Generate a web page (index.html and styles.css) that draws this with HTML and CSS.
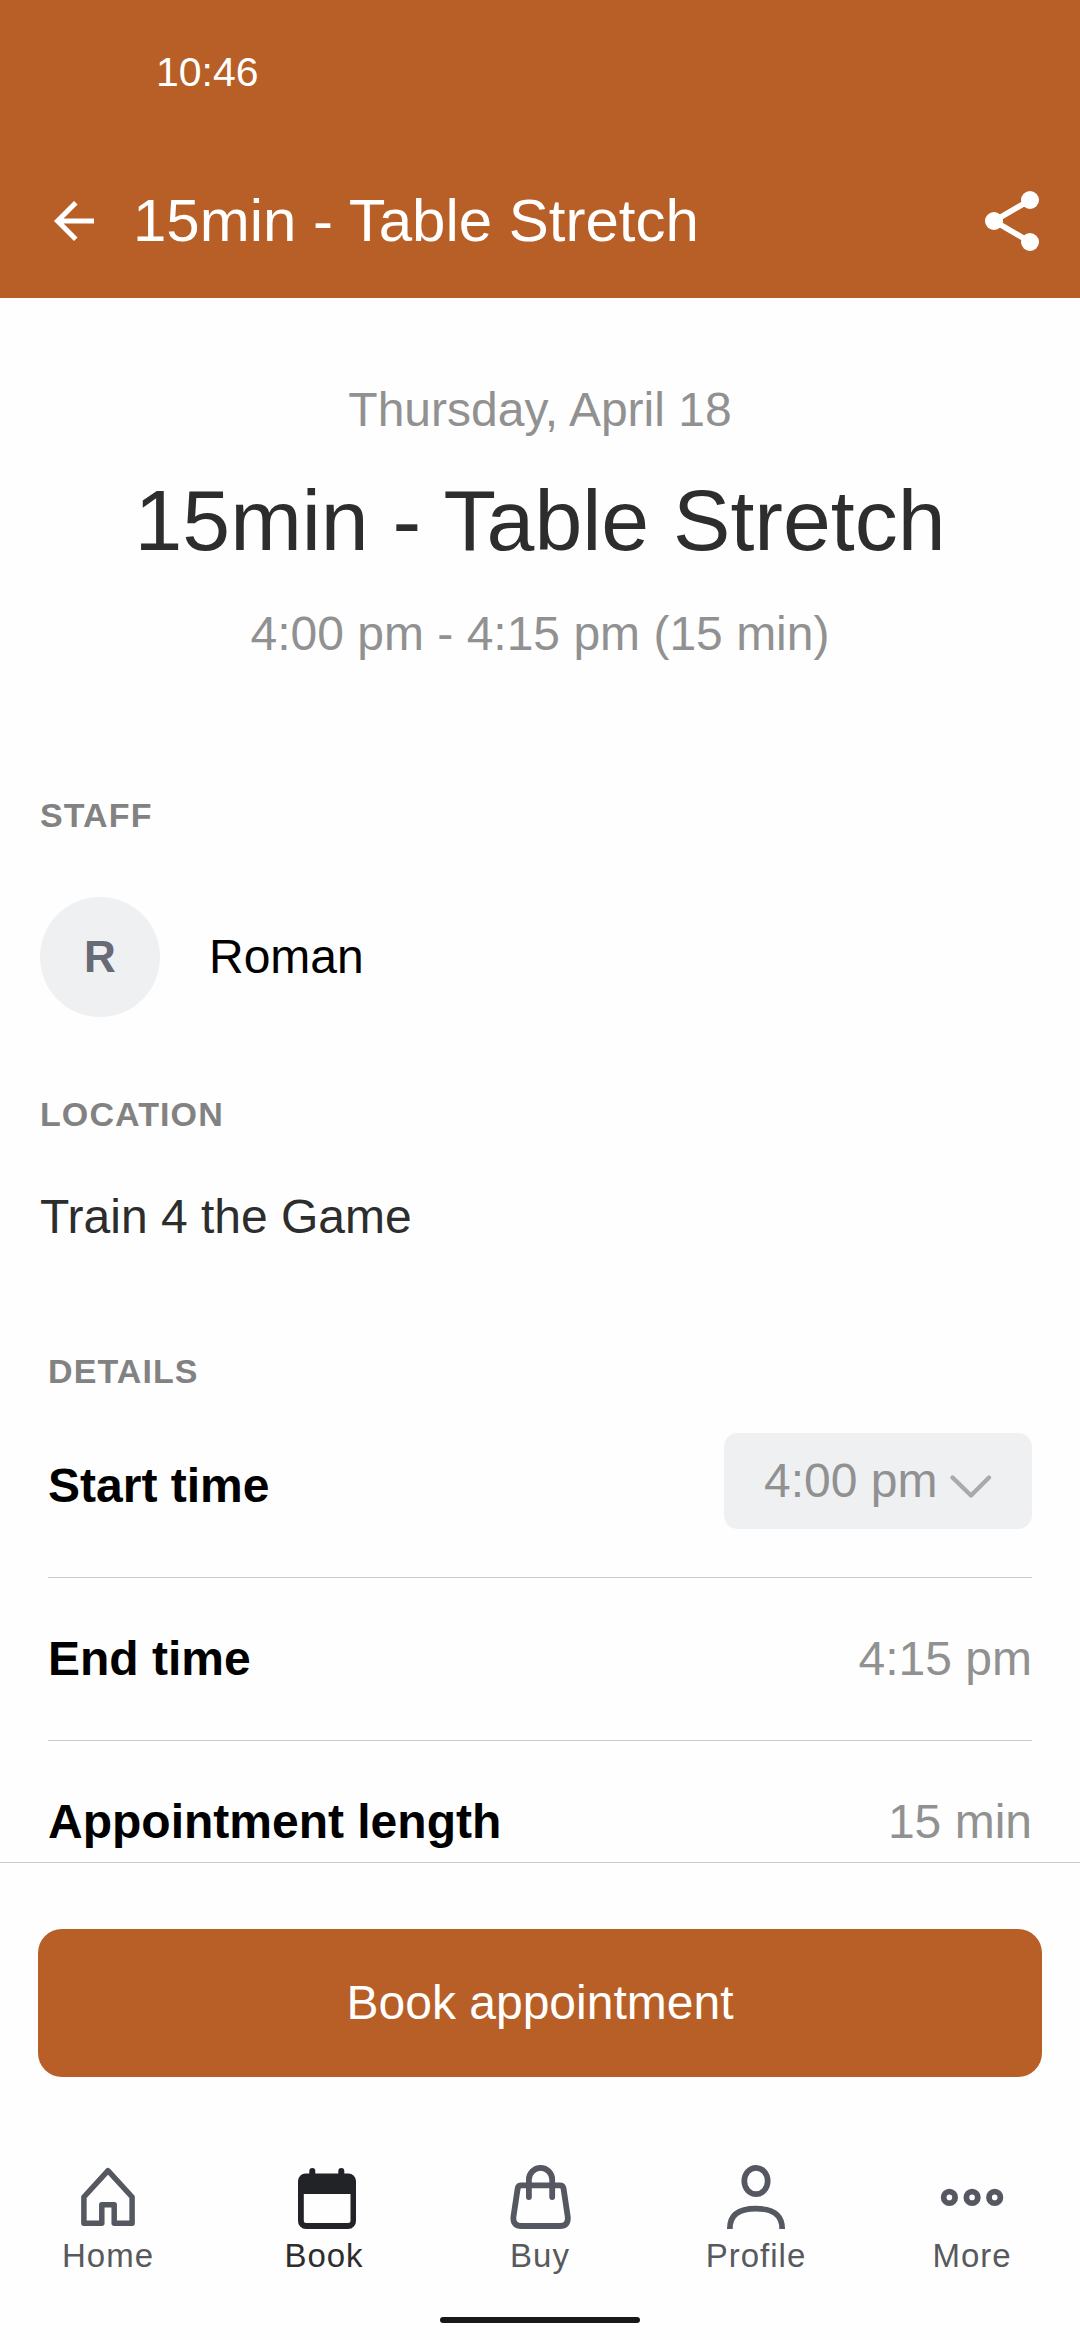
FILE: index.html
```html
<!DOCTYPE html>
<html lang="en">
<head>
<meta charset="utf-8">
<title>15min - Table Stretch</title>
<link rel="stylesheet" href="styles.css">
</head>
<body>
<div class="screen">
  <header class="header">
    <div class="status-bar">10:46</div>
    <div class="app-bar">
      <svg class="back" width="40" height="40" viewBox="4 4 16 16"><path fill="#fff" d="M20 11H7.830l5.590-5.590L12 4l-8 8 8 8 1.410-1.410L7.830 13H20v-2z"/></svg>
      <div class="app-title">15min - Table Stretch</div>
      <svg class="share" width="56" height="62" viewBox="0 0 56 62"><path d="M46 10L10 31L46 52" fill="none" stroke="#fff" stroke-width="5.600"/><g fill="#fff"><circle cx="46" cy="10" r="9"/><circle cx="10" cy="31" r="9"/><circle cx="46" cy="52" r="9"/></g></svg>
    </div>
  </header>

  <main class="content">
    <section class="summary">
      <p class="muted">Thursday, April 18</p>
      <h1 class="title">15min - Table Stretch</h1>
      <p class="muted">4:00 pm - 4:15 pm (15 min)</p>
    </section>

    <section class="staff">
      <h2 class="label">STAFF</h2>
      <div class="person">
        <div class="avatar">R</div>
        <div class="name">Roman</div>
      </div>
    </section>

    <section class="location">
      <h2 class="label">LOCATION</h2>
      <p class="place">Train 4 the Game</p>
    </section>

    <section class="details">
      <h2 class="label">DETAILS</h2>
      <div class="row row-start">
        <span class="key">Start time</span>
        <button class="picker">4:00 pm<svg width="44" height="28" viewBox="0 0 44 28"><path d="M3.500 4.500L22 22.500L40 4.500" fill="none" stroke="#a9aaac" stroke-width="4.400" stroke-linecap="round" stroke-linejoin="round"/></svg></button>
      </div>
      <div class="row">
        <span class="key">End time</span>
        <span class="value">4:15 pm</span>
      </div>
      <div class="row">
        <span class="key">Appointment length</span>
        <span class="value">15 min</span>
      </div>
    </section>
  </main>

  <footer class="footer">
    <button class="book">Book appointment</button>
    <nav class="tabs">
      <a class="tab">
        <svg class="icon" viewBox="0 0 72 72"><path d="M36 10.700L60.100 37V63.300H42.200V44.700H29.800V63.300H11.900V37Z" fill="none" stroke="currentColor" stroke-width="5.500" stroke-linejoin="round"/></svg>
        <span>Home</span>
      </a>
      <a class="tab tab-active">
        <svg class="icon" viewBox="0 0 72 72"><path d="M24.300 17V11M53.300 17V11" fill="none" stroke="#212327" stroke-width="6" stroke-linecap="round"/><path fill="#212327" fill-rule="evenodd" d="M17.500 13.500H60.500A7.500 7.500 0 0 1 68 21V60.500A8 8 0 0 1 60 69H18A8 8 0 0 1 10 60.500V21A7.500 7.500 0 0 1 17.500 13.500ZM15.800 34V60.500A2.500 2.500 0 0 0 18.300 63H60A2.500 2.500 0 0 0 62.500 60.500V34Z"/></svg>
        <span>Book</span>
      </a>
      <a class="tab">
        <svg class="icon" viewBox="0 0 72 72"><g fill="none" stroke="currentColor" stroke-width="5.800" stroke-linecap="round"><path d="M17.500 25.300H55.800Q58.900 25.300 59.500 28.300L63.800 57Q64.500 66 56 66H17.500Q8.700 66 9.400 57L13.700 28.300Q14.200 25.300 17.500 25.300Z"/><path d="M24.900 37V19.600A11.650 11.650 0 0 1 48.200 19.600V37"/></g></svg>
        <span>Buy</span>
      </a>
      <a class="tab">
        <svg class="icon" viewBox="0 0 72 72"><g fill="none" stroke="currentColor" stroke-width="5.700"><ellipse cx="36" cy="21" rx="11.700" ry="13.200"/><path d="M9.800 69C9.800 54 20 48.700 36 48.700S62.200 54 62.200 69"/></g></svg>
        <span>Profile</span>
      </a>
      <a class="tab">
        <svg class="icon" viewBox="0 0 72 72"><g fill="none" stroke="currentColor" stroke-width="5.800"><circle cx="13.400" cy="37.400" r="5.700"/><circle cx="36.100" cy="37.400" r="5.700"/><circle cx="58.700" cy="37.400" r="5.700"/></g></svg>
        <span>More</span>
      </a>
    </nav>
    <div class="home-indicator"></div>
  </footer>
</div>
</body>
</html>
```
FILE: styles.css
```css
* {
  box-sizing: border-box;
  margin: 0;
  padding: 0;
}

body {
  background: #fefefe;
  font-family: "Liberation Sans", Arial, sans-serif;
}

button {
  border: 0;
  font: inherit;
}

.screen {
  display: flex;
  flex-direction: column;
  width: 1080px;
  height: 2340px;
  overflow: hidden;
  background: #fefefe;
}

.header {
  flex: none;
  height: 298px;
  background: #b75f27;
  color: #fff;
}

.status-bar {
  height: 144px;
  padding: 49px 0 0 156px;
  font-size: 41px;
  line-height: 46px;
}

.app-bar {
  display: flex;
  align-items: center;
  height: 154px;
  padding: 0 40px 0 54px;
}

.app-title {
  flex: 1;
  margin-left: 39px;
  font-size: 60px;
  line-height: 72px;
}

.content {
  flex: 1;
  min-height: 0;
  overflow: hidden;
  padding-top: 84px;
}

.summary {
  text-align: center;
}

.muted {
  color: #919191;
  font-size: 48px;
  line-height: 56px;
}

.title {
  margin: 32px 0 36px;
  color: #2d2d2d;
  font-size: 86px;
  font-weight: 400;
  line-height: 100px;
}

.staff {
  padding: 134px 40px 0;
}

.label {
  padding-bottom: 2px;
  color: #828282;
  font-size: 34px;
  font-weight: 700;
  letter-spacing: 1.100px;
  line-height: 38px;
}

.person {
  display: flex;
  align-items: center;
  margin-top: 61px;
}

.avatar {
  width: 120px;
  height: 120px;
  border-radius: 50%;
  background: #eff0f2;
  color: #686a75;
  font-size: 44px;
  font-weight: 700;
  line-height: 120px;
  text-align: center;
}

.name {
  margin-left: 49px;
  font-size: 48px;
  line-height: 56px;
  color: #000;
}

.location {
  padding: 78px 40px 0;
}

.place {
  margin-top: 54px;
  color: #2d2d2d;
  font-size: 48px;
  line-height: 56px;
}

.details {
  padding: 107px 48px 0;
}

.row {
  display: flex;
  align-items: center;
  justify-content: space-between;
  height: 163px;
  border-bottom: 1px solid #cbcbcb;
  font-size: 48px;
  line-height: 56px;
}

.row-start {
  align-items: flex-start;
  height: 186px;
  padding-top: 41px;
}

.key {
  color: #000;
  font-weight: 700;
}

.row-start .key {
  margin-top: 25px;
}

.value {
  color: #919191;
}

.picker {
  display: flex;
  align-items: center;
  gap: 12px;
  width: 308px;
  height: 96px;
  padding-left: 40px;
  border-radius: 14px;
  background: #eff0f2;
  color: #919191;
}

.picker svg {
  margin-top: 11px;
}

.footer {
  flex: none;
  height: 478px;
  padding-top: 66px;
  border-top: 1px solid #cbcbcb;
}

.book {
  display: block;
  width: 1004px;
  height: 148px;
  margin: 0 auto;
  border-radius: 24px;
  background: #b75f27;
  color: #fff;
  font-size: 48px;
  line-height: 148px;
}

.tabs {
  display: grid;
  grid-template-columns: repeat(5, 1fr);
  margin-top: 83px;
}

.tab {
  display: flex;
  flex-direction: column;
  align-items: center;
  color: #555761;
  font-size: 33px;
  letter-spacing: 1px;
  line-height: 40px;
}

.tab span {
  margin-top: 4px;
  color: #58595d;
}

.tab-active span {
  color: #2d2d2d;
}

.icon {
  width: 72px;
  height: 72px;
}

.home-indicator {
  width: 200px;
  height: 6px;
  margin: 41px auto 0;
  border-radius: 3px;
  background: #181818;
}
```
